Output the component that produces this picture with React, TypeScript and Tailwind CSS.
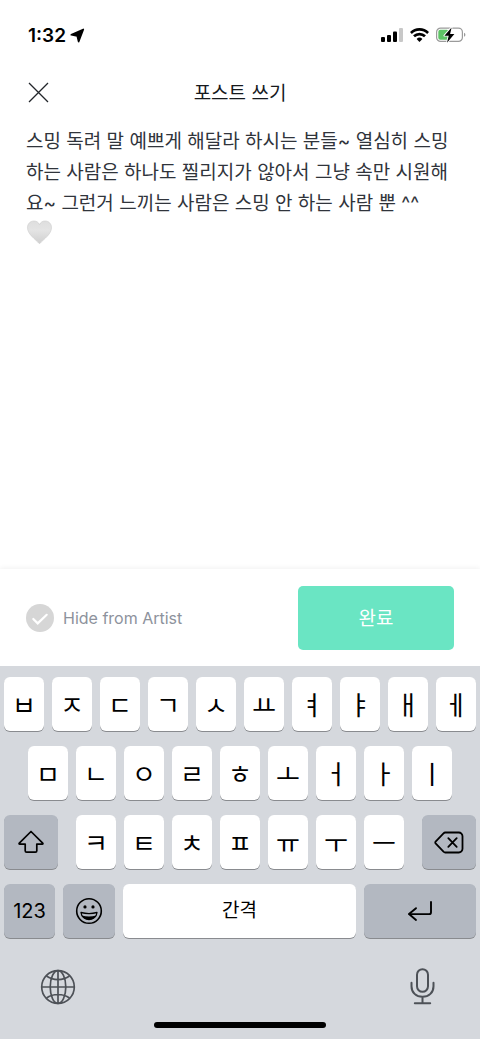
import { useState } from "react";
import type { ReactNode } from "react";
import clsx from "clsx";

const TOP_ROW = ["ㅂ", "ㅈ", "ㄷ", "ㄱ", "ㅅ", "ㅛ", "ㅕ", "ㅑ", "ㅐ", "ㅔ"];
const MIDDLE_ROW = ["ㅁ", "ㄴ", "ㅇ", "ㄹ", "ㅎ", "ㅗ", "ㅓ", "ㅏ", "ㅣ"];
const BOTTOM_ROW = ["ㅋ", "ㅌ", "ㅊ", "ㅍ", "ㅠ", "ㅜ", "ㅡ"];

const INITIAL_TEXT =
  "스밍 독려 말 예쁘게 해달라 하시는 분들~ 열심히 스밍하는 사람은 하나도 찔리지가 않아서 그냥 속만 시원해요~ 그런거 느끼는 사람은 스밍 안 하는 사람 뿐 ^^";

interface KeyProps {
  children: ReactNode;
  label?: string;
  dark?: boolean;
  className?: string;
}

const Key = ({ children, label, dark, className }: KeyProps) => (
  <button
    type="button"
    aria-label={label}
    className={clsx(
      "flex h-[54px] min-w-0 items-center justify-center rounded-md text-black shadow-[0_1px_0_#898b8f]",
      dark ? "bg-[#b3b8c1]" : "bg-white",
      className,
    )}
  >
    {children}
  </button>
);

const LetterKeys = ({ letters }: { letters: string[] }) => (
  <>
    {letters.map((letter) => (
      <Key key={letter} className="flex-1 pt-[2px] text-[26px]">
        {letter}
      </Key>
    ))}
  </>
);

const StatusBar = () => (
  <div className="flex h-[70px] items-center justify-between pr-[14px] pl-7">
    <div className="flex items-center gap-1">
      <span className="pt-[2px] text-[19px] font-semibold text-black">
        1:32
      </span>
      <svg width="15" height="15" viewBox="0 0 15 15" aria-hidden="true">
        <path
          d="M13.300 1.400 8.600 13.600 7.200 7.900 1.300 6.800Z"
          stroke="#000"
          strokeWidth="1.600"
          strokeLinejoin="round"
        />
      </svg>
    </div>
    <div className="flex items-center gap-[7px]">
      <svg width="22" height="14" viewBox="0 0 22 14" aria-hidden="true">
        <rect x="0" y="9" width="4" height="5" rx="1" />
        <rect x="6" y="7" width="4" height="7" rx="1" />
        <rect x="12" y="3.500" width="4" height="10.500" rx="1" />
        <rect x="18" y="0" width="4" height="14" rx="1" fill="#c8c8c8" />
      </svg>
      <svg width="19" height="14" viewBox="0 0 19 14" aria-hidden="true">
        <g fill="none" stroke="#000" strokeWidth="2.700">
          <path d="M.9 5A12.200 12.200 0 0 1 18.100 5" />
          <path d="M4 8.300a7.800 7.800 0 0 1 11 0" />
        </g>
        <path d="M9.500 14 6.600 11a4.100 4.100 0 0 1 5.800 0Z" />
      </svg>
      <svg width="30" height="16" viewBox="0 0 30 16" aria-hidden="true">
        <rect
          x=".6"
          y="1.100"
          width="25.800"
          height="13.300"
          rx="4"
          fill="#fff"
          stroke="#9b9b9b"
          strokeWidth="1.200"
        />
        <rect x="2.300" y="2.800" width="10.500" height="10" rx="2" fill="#5ec466" />
        <path d="M28 5.800c1.900.6 1.900 3.400 0 4Z" fill="#9b9b9b" />
        <path
          d="M15.600.4 8.400 8.700h4.300l-1.700 7 7.400-8.600h-4.300Z"
          fill="#000"
          stroke="#fff"
          strokeWidth="1.800"
          strokeLinejoin="round"
          paintOrder="stroke"
        />
      </svg>
    </div>
  </div>
);

const Header = () => (
  <header className="grid h-11 grid-cols-[1fr_auto_1fr] items-center px-7">
    <button type="button" aria-label="닫기" className="justify-self-start">
      <svg width="21" height="21" viewBox="0 0 21 21" aria-hidden="true">
        <path d="m1 1 19 19M20 1 1 20" stroke="#22262b" strokeWidth="1.300" />
      </svg>
    </button>
    <h1 className="pt-1 text-[19px] text-[#16191d]">포스트 쓰기</h1>
  </header>
);

const Editor = () => {
  const [text, setText] = useState(INITIAL_TEXT);

  return (
    <main className="flex-1 px-[26px] pt-3">
      <textarea
        aria-label="포스트 내용"
        rows={3}
        value={text}
        onChange={(event) => setText(event.target.value)}
        className="block w-full resize-none overflow-hidden text-[19px] leading-[31px] text-[#30343b] outline-none"
      />
      <svg
        width="26"
        height="25"
        viewBox="0 0 26 25"
        role="img"
        aria-label="하얀 하트"
        className="mt-px"
      >
        <defs>
          <linearGradient id="heart" x1="0" y1="0" x2="0" y2="1">
            <stop offset="0" stopColor="#dedede" />
            <stop offset=".4" stopColor="#e4e4e4" />
            <stop offset="1" stopColor="#cfcfcf" />
          </linearGradient>
        </defs>
        <path
          d="M13.500 4.600C14.500 2.300 16.500 1 19 1c3.900 0 6.500 2.900 6.500 6.600 0 6.500-7.300 11.200-12 16.200C8.800 18.800 1.500 14.100 1.500 7.600 1.500 3.900 4.100 1 8 1c2.500 0 4.500 1.300 5.500 3.600Z"
          fill="url(#heart)"
          stroke="#cbcbcb"
          strokeWidth=".6"
        />
      </svg>
    </main>
  );
};

const SubmitBar = () => {
  const [hidden, setHidden] = useState(false);

  return (
    <div className="flex h-[97px] items-center justify-between bg-white px-[26px] shadow-[0_-1px_5px_rgba(0,0,0,0.06)]">
      <label className="flex items-center gap-[9px] text-base text-[#8d929c]">
        <span className="grid">
          <input
            type="checkbox"
            checked={hidden}
            onChange={(event) => setHidden(event.target.checked)}
            className="col-start-1 row-start-1 size-7 appearance-none rounded-full bg-[#d6d6d6] checked:bg-[#6ae5c3]"
          />
          <svg
            width="28"
            height="28"
            viewBox="0 0 28 28"
            fill="none"
            aria-hidden="true"
            className="pointer-events-none col-start-1 row-start-1"
          >
            <path
              d="m7.300 15 4.400 4.400 9-8.600"
              stroke="#fff"
              strokeWidth="2.200"
              strokeLinecap="round"
            />
          </svg>
        </span>
        Hide from Artist
      </label>
      <button
        type="button"
        className="h-16 w-[156px] rounded-[5px] bg-[#6ae5c3] pt-1 text-[19px] text-white"
      >
        완료
      </button>
    </div>
  );
};

const Keyboard = () => (
  <section aria-label="키보드" className="bg-[#d5d8dd] py-[11px]">
    <div className="flex flex-col gap-[15px] px-1">
      <div className="flex gap-2">
        <LetterKeys letters={TOP_ROW} />
      </div>
      <div className="flex gap-2 px-6">
        <LetterKeys letters={MIDDLE_ROW} />
      </div>
      <div className="flex gap-[18px]">
        <Key label="Shift" dark className="w-[54px]">
          <svg width="26" height="24" viewBox="0 0 26 24" aria-hidden="true">
            <path
              d="M13 1.500 1.300 13.200c-.4.400-.2.900.4.900h5.500v6.600c0 .900.500 1.400 1.400 1.400h8.800c.9 0 1.400-.5 1.400-1.400v-6.600h5.500c.6 0 .8-.5.400-.9Z"
              fill="none"
              stroke="#000"
              strokeWidth="1.700"
              strokeLinejoin="round"
            />
          </svg>
        </Key>
        <div className="flex flex-1 gap-2">
          <LetterKeys letters={BOTTOM_ROW} />
        </div>
        <Key label="지우기" dark className="w-[54px]">
          <svg
            width="30"
            height="23"
            viewBox="0 0 30 23"
            fill="none"
            stroke="#000"
            strokeWidth="1.800"
            strokeLinecap="round"
            strokeLinejoin="round"
            aria-hidden="true"
          >
            <path d="M11.200 1.500h13.600a3.700 3.700 0 0 1 3.700 3.700v12.600a3.700 3.700 0 0 1-3.700 3.700H11.200c-.7 0-1.200-.3-1.700-.8L1.600 12.300c-.5-.6-.5-1 0-1.600l7.900-8.400c.5-.5 1-.8 1.700-.8Z" />
            <path d="m14.300 7.200 8.400 8.600M22.700 7.200l-8.400 8.600" />
          </svg>
        </Key>
      </div>
      <div className="flex gap-2">
        <Key dark className="w-[51px] text-xl">
          123
        </Key>
        <Key label="이모티콘" dark className="w-[52px]">
          <svg width="28" height="28" viewBox="0 0 28 28" aria-hidden="true">
            <circle
              cx="14"
              cy="14"
              r="12.300"
              fill="none"
              stroke="#000"
              strokeWidth="1.600"
            />
            <circle cx="10" cy="9.900" r="1.600" />
            <circle cx="18" cy="9.900" r="1.600" />
            <path
              d="M6 15.500c5 1.400 11 1.400 16 0-.4 4.300-3.800 7-8 7s-7.600-2.700-8-7Z"
              fill="none"
              stroke="#000"
              strokeWidth="1.300"
              strokeLinejoin="round"
            />
            <path d="M6.800 18.400c4.600 1.300 9.800 1.300 14.400 0-1.200 2.700-3.900 4.300-7.200 4.300s-6-1.600-7.200-4.300Z" />
          </svg>
        </Key>
        <Key className="flex-1 text-[19px]">간격</Key>
        <Key label="줄바꿈" dark className="w-28">
          <svg
            width="26"
            height="22"
            viewBox="0 0 26 22"
            fill="none"
            stroke="#000"
            strokeWidth="1.900"
            strokeLinecap="round"
            strokeLinejoin="round"
            aria-hidden="true"
          >
            <path d="M24 2v10.200c0 1.300-.6 1.900-1.900 1.900H2.500" />
            <path d="M9 8.200 2 14.100l7 5.900" />
          </svg>
        </Key>
      </div>
    </div>

    <div className="mt-[31px] flex h-9 items-center justify-between pr-[45px] pl-10">
      <button type="button" aria-label="언어 변경">
        <svg
          width="36"
          height="36"
          viewBox="0 0 36 36"
          fill="none"
          stroke="#4d5157"
          strokeWidth="1.700"
          aria-hidden="true"
        >
          <circle cx="18" cy="18" r="16.300" />
          <ellipse cx="18" cy="18" rx="7.800" ry="16.300" />
          <path d="M18 1.700v32.600M1.700 18h32.600M6.500 7c6.400 4.700 16.600 4.700 23 0M6.500 29c6.400-4.700 16.600-4.700 23 0" />
        </svg>
      </button>
      <button type="button" aria-label="음성 입력">
        <svg
          width="25"
          height="38"
          viewBox="0 0 25 38"
          fill="none"
          stroke="#4d5157"
          strokeWidth="2"
          strokeLinecap="round"
          aria-hidden="true"
        >
          <rect x="7" y="1.200" width="11" height="22.600" rx="5.500" />
          <path d="M1.500 14.800v3.400c0 6.300 4.600 10.600 11 10.600s11-4.300 11-10.600v-3.400M12.500 28.800v6.400M4.800 35.300h15.400" />
        </svg>
      </button>
    </div>
    <div className="mx-auto mt-[17px] h-[6px] w-[172px] rounded-full bg-black" />
  </section>
);

const App = () => (
  <div className="flex min-h-screen flex-col bg-white font-['Inter','Noto_Sans_CJK_KR',sans-serif]">
    <StatusBar />
    <Header />
    <Editor />
    <SubmitBar />
    <Keyboard />
  </div>
);

export default App;
